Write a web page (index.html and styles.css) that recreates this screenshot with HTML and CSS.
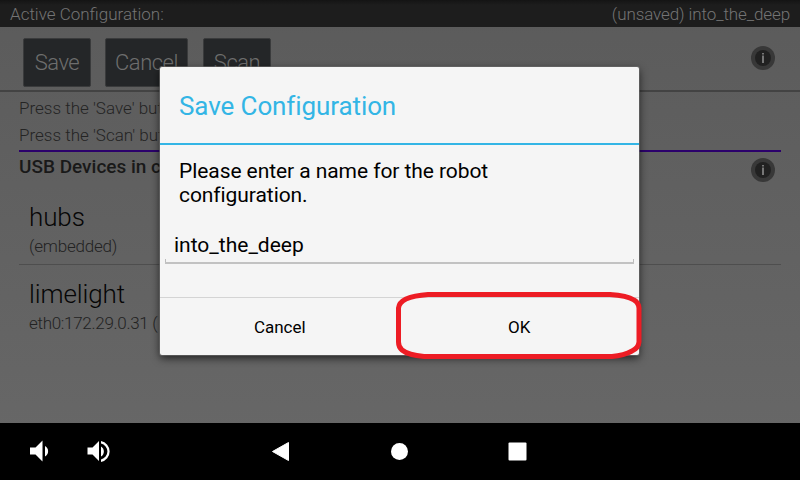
FILE: index.html
```html
<!DOCTYPE html>
<html lang="en">
<head>
<meta charset="utf-8">
<title>Save Configuration</title>
<link rel="stylesheet" href="styles.css">
</head>
<body>
<div class="screen">
  <header class="status"><span class="status-label">Active Configuration:</span><span class="status-name">(unsaved) into_the_deep</span></header>
  <div class="toolbar">
    <div class="tool save"><span>Save</span></div>
    <div class="tool cancel"><span>Cancel</span></div>
    <div class="tool scan"><span>Scan</span></div>
    <svg class="info" viewBox="0 0 24 24"><circle cx="12" cy="12" r="12" fill="#383838"/><circle cx="12" cy="12" r="8" fill="#212121"/><path d="M11 7h2v1.500h-2zM11 9.500h2V17h-2z" fill="#777"/></svg>
  </div>
  <main class="content">
    <p class="hint"><span>Press the 'Save' but</span></p>
    <p class="hint second"><span>Press the 'Scan' but</span></p>
    <div class="section">
      <h2><span>USB Devices in c</span></h2>
      <svg class="info" viewBox="0 0 24 24"><circle cx="12" cy="12" r="12" fill="#383838"/><circle cx="12" cy="12" r="8" fill="#212121"/><path d="M11 7h2v1.500h-2zM11 9.500h2V17h-2z" fill="#777"/></svg>
    </div>
    <div class="device first"><div class="name">hubs</div><div class="detail">(embedded)</div></div>
    <div class="device"><div class="name">limelight</div><div class="detail address">eth0:172.29.0.31 (</div></div>
  </main>
  <nav class="navbar">
    <svg viewBox="0 0 800 57" width="800" height="57" fill="#fff">
      <path d="M30 24.500h5.500l7-7v21l-7-7H30zM45 23a6 6 0 0 1 0 10.500z"/>
      <path d="M87.500 24.500h5l6.500-6.500v20l-6.500-6.500h-5zM101 23.500a5.800 5.800 0 0 1 0 10z"/>
      <path d="M101 18a10.700 10.700 0 0 1 0 21v-2.500a8.200 8.200 0 0 0 0-16z"/>
      <path d="M272.500 28.500L288.500 19.500V37.500z" stroke="#fff" stroke-width="1" stroke-linejoin="round"/>
      <circle cx="399.500" cy="28.500" r="8.500"/>
      <rect x="508.500" y="19.500" width="18" height="18" rx="1"/>
    </svg>
  </nav>
  <section class="dialog">
    <h1><span>Save Configuration</span></h1>
    <p class="message">Please enter a name for the robot<br>configuration.</p>
    <div class="field"><span>into_the_deep</span></div>
    <div class="actions"><div><span>Cancel</span></div><div><span>OK</span></div></div>
  </section>
  <svg class="marker" viewBox="0 0 250 70" width="250" height="70"><path d="M32 4.500H214Q231 5.500 238 10Q242.500 12.500 243 18V52Q242.500 58 236 61Q228 65.500 216 66.500H28Q12 65 6 60Q2.500 57 2.500 52V18Q3 12.500 10 9Q18 5.500 32 4.500z" fill="none" stroke="#ed1c24" stroke-width="5"/></svg>
</div>
</body>
</html>
```
FILE: styles.css
```css
* { box-sizing: border-box; }
body, h1, h2, p { margin: 0; }
body { font-family: Roboto, "Liberation Sans", sans-serif; }
.screen {
  position: relative;
  display: flex;
  flex-direction: column;
  width: 800px;
  height: 480px;
  overflow: hidden;
  background: linear-gradient(#5b5b5b, #686868);
}
.status {
  display: flex;
  justify-content: space-between;
  height: 27px;
  padding: 2px 10px 0;
  background: linear-gradient(#141414, #1d1d1d 5px);
  color: #747474;
  font-size: 17px;
  font-weight: 300;
  line-height: 24px;
  white-space: nowrap;
}
.status-name { letter-spacing: -0.1px; }
.toolbar {
  display: flex;
  height: 65px;
  padding: 11px 25px 0 23px;
  border-bottom: 2px solid #434343;
}
.tool {
  height: 49px;
  border: 1px solid #3a3b3c;
  border-radius: 2px;
  background: #242628;
  color: #6e6e6e;
  font-size: 22px;
  font-weight: 300;
  letter-spacing: -0.5px;
  line-height: 48px;
  text-align: center;
}
.save { width: 68px; }
.cancel { width: 83px; margin-left: 14px; }
.scan { width: 68px; margin-left: 15px; }
.info { width: 24px; height: 24px; margin-left: auto; flex: none; }
.toolbar .info { margin-top: 8px; }
.content { height: 331px; padding: 3px 19px 0; white-space: nowrap; }
.hint {
  height: 27px;
  color: #242424;
  font-size: 17px;
  font-weight: 300;
  line-height: 27px;
}
.second { height: 28px; }
.section {
  display: flex;
  height: 40px;
  padding-right: 6px;
  border-top: 2px solid #2b006b;
}
.section .info { margin-top: 6px; }
h2 {
  color: #191919;
  font-size: 19px;
  font-weight: 500;
  line-height: 29px;
}
.device { height: 77px; padding: 12px 10px 0; }
.first { height: 75px; padding-top: 10px; border-bottom: 1px solid #4e4e4e; }
.name { color: #060606; font-size: 26px; font-weight: 300; letter-spacing: -0.1px; line-height: 35px; }
.detail {
  color: #222;
  font-size: 17px;
  font-weight: 300;
  letter-spacing: -0.2px;
  line-height: 23px;
}
.address { letter-spacing: -0.3px; }
.navbar { height: 57px; background: #000; }
.navbar svg { display: block; }
.dialog {
  position: absolute;
  left: 160px;
  top: 67px;
  width: 479px;
  height: 288px;
  border-radius: 2px;
  background: #f5f5f5;
  box-shadow: 0 0 0 1px rgba(110,110,110,.6), 0 3px 8px rgba(0,0,0,.7);
  color: #000;
}
h1 {
  height: 78px;
  padding-left: 19px;
  border-bottom: 2px solid #33b5e5;
  color: #33b5e5;
  font-size: 26px;
  font-weight: 400;
  letter-spacing: -0.1px;
  line-height: 78px;
}
.message { padding: 14px 19px 0; font-size: 21px; letter-spacing: -0.07px; line-height: 24px; }
.field {
  height: 36px;
  margin: 21px 5px 0;
  padding-left: 9px;
  border-bottom: 2px solid #c2c2c2;
  background: linear-gradient(#bcbcbc, #bcbcbc) left bottom / 1px 3px no-repeat, linear-gradient(#bcbcbc, #bcbcbc) right bottom / 1px 3px no-repeat;
  font-size: 21px;
  line-height: 34px;
}
.actions {
  display: grid;
  grid-template-columns: 1fr 1fr;
  height: 58px;
  margin-top: 33px;
  border-top: 1px solid #d4d4d4;
  font-size: 17px;
  line-height: 59px;
  text-align: center;
}
.marker { position: absolute; left: 396px; top: 290px; }
```
